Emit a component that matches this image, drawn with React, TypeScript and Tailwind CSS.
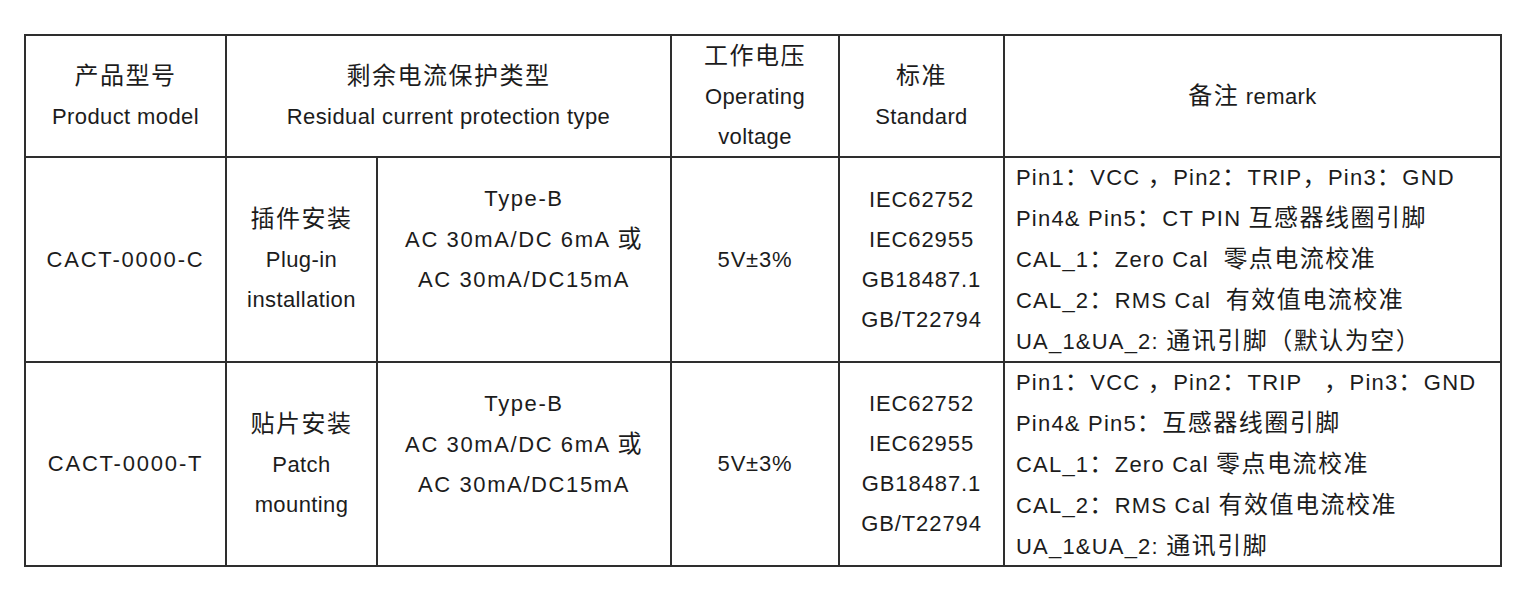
import React from 'react'

const Zh = ({ children }: { children: React.ReactNode }) => (
  <span className="text-[24px] tracking-[1.5px]">{children}</span>
)

const cell = 'bg-white flex flex-col items-center justify-center text-center'

function Remarks({ lines }: { lines: React.ReactNode[] }) {
  return (
    <div className="bg-white flex flex-col justify-center pl-[11px] whitespace-pre tracking-[1.2px]">
      {lines.map((l, i) => (
        <div key={i}>{l}</div>
      ))}
    </div>
  )
}

function TypeB() {
  return (
    <div className={`${cell} pb-[40px] tracking-[1.6px]`}>
      <div>Type-B</div>
      <div>AC 30mA/DC 6mA <Zh>或</Zh></div>
      <div>AC 30mA/DC15mA</div>
    </div>
  )
}

function Standards() {
  return (
    <div className={`${cell} tracking-[0.9px]`}>
      <div>IEC62752</div>
      <div>IEC62955</div>
      <div>GB18487.1</div>
      <div>GB/T22794</div>
    </div>
  )
}

export default function App() {
  return (
    <div className="min-h-screen bg-white pt-[34px] pl-[24px]">
      <div
        className="grid w-[1478px] grid-cols-[199px_149px_292px_166px_163px_495px] grid-rows-[120px_203px_202px] gap-[2px] p-[2px] bg-[#2e2e2e] text-[22px] leading-[40px] tracking-[0.4px] text-[#1c1c1c]"
        style={{ fontFamily: '"Liberation Sans", "Noto Sans CJK SC", sans-serif' }}
      >
        {/* 表头 */}
        <div className={cell}>
          <div><Zh>产品型号</Zh></div>
          <div>Product model</div>
        </div>
        <div className={`${cell} col-span-2`}>
          <div><Zh>剩余电流保护类型</Zh></div>
          <div>Residual current protection type</div>
        </div>
        <div className={cell}>
          <div><Zh>工作电压</Zh></div>
          <div>Operating</div>
          <div>voltage</div>
        </div>
        <div className={cell}>
          <div><Zh>标准</Zh></div>
          <div>Standard</div>
        </div>
        <div className={cell}>
          <div><Zh>备注</Zh> remark</div>
        </div>

        {/* 插件安装 */}
        <div className={`${cell} tracking-[1.8px]`}>CACT-0000-C</div>
        <div className={cell}>
          <div><Zh>插件安装</Zh></div>
          <div>Plug-in</div>
          <div>installation</div>
        </div>
        <TypeB />
        <div className={`${cell} tracking-[0.8px]`}>5V±3%</div>
        <Standards />
        <Remarks
          lines={[
            <>Pin1<Zh>：</Zh>VCC <Zh>，</Zh>Pin2<Zh>：</Zh>TRIP<Zh>，</Zh>Pin3<Zh>：</Zh>GND</>,
            <>Pin4&amp; Pin5<Zh>：</Zh>CT PIN <Zh>互感器线圈引脚</Zh></>,
            <>CAL_1<Zh>：</Zh>Zero Cal  <Zh>零点电流校准</Zh></>,
            <>CAL_2<Zh>：</Zh>RMS Cal  <Zh>有效值电流校准</Zh></>,
            <>UA_1&amp;UA_2: <Zh>通讯引脚（默认为空）</Zh></>,
          ]}
        />

        {/* 贴片安装 */}
        <div className={`${cell} tracking-[1.8px]`}>CACT-0000-T</div>
        <div className={cell}>
          <div><Zh>贴片安装</Zh></div>
          <div>Patch</div>
          <div>mounting</div>
        </div>
        <TypeB />
        <div className={`${cell} tracking-[0.8px]`}>5V±3%</div>
        <Standards />
        <Remarks
          lines={[
            <>Pin1<Zh>：</Zh>VCC <Zh>，</Zh>Pin2<Zh>：</Zh>TRIP   <Zh>，</Zh>Pin3<Zh>：</Zh>GND</>,
            <>Pin4&amp; Pin5<Zh>：</Zh><Zh>互感器线圈引脚</Zh></>,
            <>CAL_1<Zh>：</Zh>Zero Cal <Zh>零点电流校准</Zh></>,
            <>CAL_2<Zh>：</Zh>RMS Cal <Zh>有效值电流校准</Zh></>,
            <>UA_1&amp;UA_2: <Zh>通讯引脚</Zh></>,
          ]}
        />
      </div>
    </div>
  )
}
